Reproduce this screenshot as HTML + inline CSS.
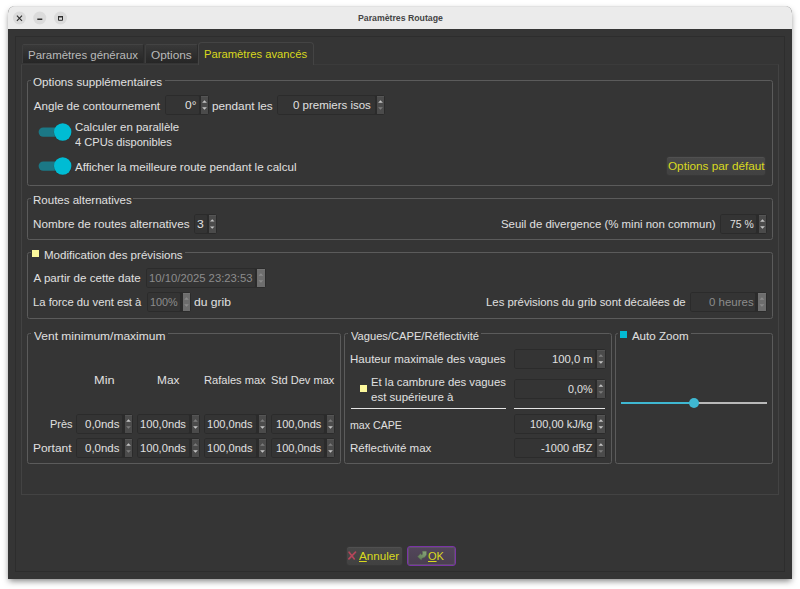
<!DOCTYPE html>
<html lang="fr"><head><meta charset="utf-8"><title>Paramètres Routage</title>
<style>
html,body{margin:0;padding:0;}
body{width:800px;height:589px;background:#fff;position:relative;overflow:hidden;
 font-family:"Liberation Sans",sans-serif;font-size:11.6px;color:#e0e0e0;}
#win{position:absolute;left:8px;top:6px;width:784px;height:573px;background:#353535;
 border-radius:7px 7px 0 0;box-shadow:0 3px 6px -1px rgba(0,0,0,.5);overflow:hidden;}
#tb{position:absolute;left:0;top:0;width:784px;height:23px;background:#ebebeb;border-top:1px solid #e2e2e2;box-sizing:border-box;}
.ttl{font-weight:bold;font-size:9.2px;color:#454545;}
.wb{position:absolute;top:5px;width:13px;height:13px;border-radius:50%;background:#dadada;}
.wb svg{display:block}
#frame{position:absolute;left:15px;top:36px;width:770px;height:536px;border:1px solid #2d2d2d;box-sizing:border-box;}
#pane{position:absolute;left:21px;top:64px;width:758px;height:431px;border:1px solid #434343;border-top-color:#3b3b3b;box-sizing:border-box;}
.tab{position:absolute;top:44px;height:19px;box-sizing:border-box;border-top:1px solid #434343;border-left:1px solid #3e3e3e;border-right:1px solid #2b2b2b;
 border-radius:2px 2px 0 0;background:linear-gradient(#393939,#262626);}
.tabsel{position:absolute;top:42px;height:23px;box-sizing:border-box;border:1px solid #444;border-bottom:none;
 border-radius:4px 4px 0 0;background:#353535;}
.t{position:absolute;height:16px;line-height:16px;white-space:nowrap;transform-origin:0 50%;}
.dim{color:#bababa}
.yel{color:#d9d91e}
.dtx{color:#8c8c8c}
.g{position:absolute;box-sizing:border-box;border:1px solid #5b5b5b;border-radius:2.5px;}
.gg{position:absolute;height:3px;background:#353535;}
.sp{position:absolute;box-sizing:border-box;background:#2b2b2b;border-radius:3px;}
.sp .f{position:absolute;left:1px;top:1px;box-sizing:border-box;border-radius:1px;background:#343434;}
.sp .b{position:absolute;right:1px;top:1px;background:#4b4b4b;border-top:1px solid #555;box-sizing:border-box;}
.sp .b svg{position:absolute;left:0;width:100%;display:block;fill:#c4c4c4;}
.sp .b svg.u{top:2.5px;}
.sp .b svg.d{bottom:4px;}
.sp .b svg.off{fill:#7c7c7c;}
.sp.dis .b{background:#6d6d6d;border-top-color:#747474}
.sp.dis .b svg{fill:#8a8a8a}
.btn{position:absolute;box-sizing:border-box;border:1px solid #383838;border-radius:3px;background:linear-gradient(#484848,#414141);box-shadow:inset 0 1px 0 #505050;}
.btn.ok{border-color:#7a34a6;background:linear-gradient(#52465a,#4a3f50);box-shadow:inset 0 0 0 1px #5f5367;}
.cb{position:absolute;width:7px;height:7px;}
.hl{position:absolute;height:1px;background:#e4e4e4;}
u{text-decoration:underline;text-decoration-thickness:1px;text-underline-offset:.5px;}
</style></head>
<body>
<div id="win"><div id="tb"><svg width="80" height="22" viewBox="0 0 80 22" style="position:absolute;left:0;top:0;display:block"><circle cx="11.45" cy="11" r="6.5" fill="#dbdbdb"/><circle cx="31.75" cy="11" r="6.5" fill="#dbdbdb"/><circle cx="52.5" cy="11" r="6.5" fill="#dbdbdb"/><path d="M8.9 8.7 L14 13.8 M14 8.7 L8.9 13.8" stroke="#2f2f2f" stroke-width="1.15" fill="none"/><path d="M29.3 12.2 H34.3" stroke="#2f2f2f" stroke-width="1.4" fill="none"/><path d="M50.5 9.8 H54.5 V13.3 H50.5 Z" stroke="#2f2f2f" stroke-width="1" fill="none"/><path d="M50 9.6 H55" stroke="#2f2f2f" stroke-width="1.3" fill="none"/></svg></div></div>
<div class="t ttl" style="left:357.53px;top:9.70px;transform:scaleX(0.9499);">Paramètres Routage</div>
<div id="frame"></div>
<div id="pane"></div>
<div class="tab" style="left:22px;width:122px"></div>
<div class="tab" style="left:145px;width:53px"></div>
<div class="tabsel" style="left:198px;width:116px"></div>
<div class="t dim" style="left:28.01px;top:47.00px;transform:scaleX(0.9865);">Paramètres généraux</div>
<div class="t dim" style="left:150.74px;top:47.00px;transform:scaleX(1.0191);">Options</div>
<div class="t yel" style="left:203.97px;top:46.00px;transform:scaleX(0.9696);">Paramètres avancés</div>
<div class="g" style="left:27px;top:80px;width:746px;height:106px"></div>
<div class="gg" style="left:31px;top:79px;width:134px"></div>
<div class="t " style="left:33.25px;top:74.00px;transform:scaleX(1.0059);">Options supplémentaires</div>
<div class="t " style="left:33.75px;top:98.00px;">Angle de contournement</div>
<div class="sp" style="left:165px;top:95px;width:44px;height:20px"><div class="f" style="width:32.5px;height:18px"></div><div class="b" style="width:7px;height:18px"><svg class="u" width="7" height="3" viewBox="0 0 7 3"><path d="M1.1 2.7 L3.5 0.2 L5.9 2.7 Z"/></svg><svg class="d" width="7" height="3" viewBox="0 0 7 3"><path d="M1.1 0.3 L3.5 2.8 L5.9 0.3 Z"/></svg></div></div>
<div class="t " style="left:184.58px;top:97.00px;transform:scaleX(1.0300);">0°</div>
<div class="t " style="left:212.24px;top:98.00px;transform:scaleX(1.0128);">pendant les</div>
<div class="sp" style="left:276.5px;top:95px;width:108.5px;height:20px"><div class="f" style="width:97.0px;height:18px"></div><div class="b" style="width:7px;height:18px"><svg class="u" width="7" height="3" viewBox="0 0 7 3"><path d="M1.1 2.7 L3.5 0.2 L5.9 2.7 Z"/></svg><svg class="d off" width="7" height="3" viewBox="0 0 7 3"><path d="M1.1 0.3 L3.5 2.8 L5.9 0.3 Z"/></svg></div></div>
<div class="t " style="left:293.25px;top:97.00px;transform:scaleX(0.9904);">0 premiers isos</div>
<svg style="position:absolute;left:36px;top:120.1px" width="40" height="24" viewBox="0 0 40 24"><rect x="2.6" y="7.4" width="30" height="9.4" rx="4.7" fill="#1b7886"/><circle cx="26.7" cy="12.5" r="8.9" fill="#2c2c2c" opacity=".45"/><circle cx="26.7" cy="12" r="8.7" fill="#00bcd4"/></svg>
<svg style="position:absolute;left:36px;top:154.3px" width="40" height="24" viewBox="0 0 40 24"><rect x="2.6" y="7.4" width="30" height="9.4" rx="4.7" fill="#1b7886"/><circle cx="26.7" cy="12.5" r="8.9" fill="#2c2c2c" opacity=".45"/><circle cx="26.7" cy="12" r="8.7" fill="#00bcd4"/></svg>
<div class="t " style="left:74.51px;top:119.00px;transform:scaleX(0.9852);">Calculer en parallèle</div>
<div class="t " style="left:74.76px;top:133.50px;transform:scaleX(0.9572);">4 CPUs disponibles</div>
<div class="t " style="left:75.00px;top:159.00px;">Afficher la meilleure route pendant le calcul</div>
<div class="btn" style="left:666px;top:156px;width:100px;height:20px"></div>
<div class="t yel" style="left:667.59px;top:157.80px;transform:scaleX(1.0116);">Options par défaut</div>
<div class="g" style="left:27px;top:198px;width:746px;height:42px"></div>
<div class="gg" style="left:31px;top:197px;width:102px"></div>
<div class="t " style="left:32.85px;top:192.00px;transform:scaleX(0.9939);">Routes alternatives</div>
<div class="t " style="left:32.84px;top:216.00px;transform:scaleX(1.0075);">Nombre de routes alternatives</div>
<div class="sp" style="left:193.5px;top:214px;width:23.0px;height:20px"><div class="f" style="width:12.5px;height:18px"></div><div class="b" style="width:6.5px;height:18px"><svg class="u" width="7" height="3" viewBox="0 0 7 3"><path d="M1.1 2.7 L3.5 0.2 L5.9 2.7 Z"/></svg><svg class="d" width="7" height="3" viewBox="0 0 7 3"><path d="M1.1 0.3 L3.5 2.8 L5.9 0.3 Z"/></svg></div></div>
<div class="t " style="left:197.23px;top:216.00px;transform:scaleX(1.0455);">3</div>
<div class="t " style="left:501.01px;top:216.00px;transform:scaleX(0.9850);">Seuil de divergence (% mini non commun)</div>
<div class="sp" style="left:719.5px;top:214px;width:47.0px;height:20px"><div class="f" style="width:35.5px;height:18px"></div><div class="b" style="width:7px;height:18px"><svg class="u" width="7" height="3" viewBox="0 0 7 3"><path d="M1.1 2.7 L3.5 0.2 L5.9 2.7 Z"/></svg><svg class="d" width="7" height="3" viewBox="0 0 7 3"><path d="M1.1 0.3 L3.5 2.8 L5.9 0.3 Z"/></svg></div></div>
<div class="t " style="left:729.55px;top:216.00px;transform:scaleX(0.8971);">75 %</div>
<div class="g" style="left:27px;top:252px;width:746px;height:67px"></div>
<div class="gg" style="left:31px;top:251px;width:153.5px"></div>
<div class="cb" style="left:32px;top:250px;background:#fcf89c"></div>
<div class="t " style="left:44.35px;top:246.70px;transform:scaleX(0.9957);">Modification des prévisions</div>
<div class="t " style="left:33.60px;top:270.00px;">A partir de cette date</div>
<div class="sp dis" style="left:145.5px;top:268px;width:120.5px;height:20px"><div class="f" style="width:108.2px;height:18px"></div><div class="b" style="width:7.8px;height:18px"><svg class="u" width="7" height="3" viewBox="0 0 7 3"><path d="M1.1 2.7 L3.5 0.2 L5.9 2.7 Z"/></svg><svg class="d" width="7" height="3" viewBox="0 0 7 3"><path d="M1.1 0.3 L3.5 2.8 L5.9 0.3 Z"/></svg></div></div>
<div class="t dtx" style="left:149.02px;top:270.00px;transform:scaleX(0.9734);">10/10/2025 23:23:53</div>
<div class="t " style="left:32.87px;top:294.00px;transform:scaleX(0.9720);">La force du vent est à</div>
<div class="sp dis" style="left:147px;top:292px;width:43.75px;height:20px"><div class="f" style="width:32.25px;height:18px"></div><div class="b" style="width:7px;height:18px"><svg class="u" width="7" height="3" viewBox="0 0 7 3"><path d="M1.1 2.7 L3.5 0.2 L5.9 2.7 Z"/></svg><svg class="d" width="7" height="3" viewBox="0 0 7 3"><path d="M1.1 0.3 L3.5 2.8 L5.9 0.3 Z"/></svg></div></div>
<div class="t dtx" style="left:149.90px;top:294.00px;transform:scaleX(0.9351);">100%</div>
<div class="t " style="left:194.48px;top:294.00px;transform:scaleX(1.0435);">du grib</div>
<div class="t " style="left:486.27px;top:294.00px;transform:scaleX(0.9798);">Les prévisions du grib sont décalées de</div>
<div class="sp dis" style="left:689.5px;top:292px;width:77.25px;height:20px"><div class="f" style="width:64.95px;height:18px"></div><div class="b" style="width:7.8px;height:18px"><svg class="u" width="7" height="3" viewBox="0 0 7 3"><path d="M1.1 2.7 L3.5 0.2 L5.9 2.7 Z"/></svg><svg class="d" width="7" height="3" viewBox="0 0 7 3"><path d="M1.1 0.3 L3.5 2.8 L5.9 0.3 Z"/></svg></div></div>
<div class="t dtx" style="left:709.26px;top:294.00px;transform:scaleX(0.9887);">0 heures</div>
<div class="g" style="left:27px;top:333px;width:314px;height:131px"></div>
<div class="gg" style="left:31px;top:332px;width:137px"></div>
<div class="t " style="left:33.75px;top:327.70px;transform:scaleX(1.0356);">Vent minimum/maximum</div>
<div class="t " style="left:93.97px;top:372.00px;transform:scaleX(1.1014);">Min</div>
<div class="t " style="left:156.93px;top:372.00px;transform:scaleX(1.0238);">Max</div>
<div class="t " style="left:204.28px;top:372.00px;transform:scaleX(0.9567);">Rafales max</div>
<div class="t " style="left:270.92px;top:372.00px;transform:scaleX(0.9551);">Std Dev max</div>
<div class="t " style="left:49.59px;top:416.00px;transform:scaleX(0.9451);">Près</div>
<div class="t " style="left:33.33px;top:440.00px;transform:scaleX(1.0313);">Portant</div>
<div class="sp" style="left:75.5px;top:414px;width:57.5px;height:20px"><div class="f" style="width:45.5px;height:18px"></div><div class="b" style="width:7px;height:18px"><svg class="u" width="7" height="3" viewBox="0 0 7 3"><path d="M1.1 2.7 L3.5 0.2 L5.9 2.7 Z"/></svg><svg class="d off" width="7" height="3" viewBox="0 0 7 3"><path d="M1.1 0.3 L3.5 2.8 L5.9 0.3 Z"/></svg></div></div>
<div class="t " style="left:85.30px;top:416.00px;transform:scaleX(0.9912);">0,0nds</div>
<div class="sp" style="left:136.5px;top:414px;width:63.4px;height:20px"><div class="f" style="width:51.4px;height:18px"></div><div class="b" style="width:7px;height:18px"><svg class="u off" width="7" height="3" viewBox="0 0 7 3"><path d="M1.1 2.7 L3.5 0.2 L5.9 2.7 Z"/></svg><svg class="d" width="7" height="3" viewBox="0 0 7 3"><path d="M1.1 0.3 L3.5 2.8 L5.9 0.3 Z"/></svg></div></div>
<div class="t " style="left:140.28px;top:416.00px;transform:scaleX(0.9626);">100,0nds</div>
<div class="sp" style="left:203.5px;top:414px;width:63.3px;height:20px"><div class="f" style="width:51.3px;height:18px"></div><div class="b" style="width:7px;height:18px"><svg class="u off" width="7" height="3" viewBox="0 0 7 3"><path d="M1.1 2.7 L3.5 0.2 L5.9 2.7 Z"/></svg><svg class="d" width="7" height="3" viewBox="0 0 7 3"><path d="M1.1 0.3 L3.5 2.8 L5.9 0.3 Z"/></svg></div></div>
<div class="t " style="left:207.48px;top:416.00px;transform:scaleX(0.9540);">100,0nds</div>
<div class="sp" style="left:271.4px;top:414px;width:63.3px;height:20px"><div class="f" style="width:51.3px;height:18px"></div><div class="b" style="width:7px;height:18px"><svg class="u off" width="7" height="3" viewBox="0 0 7 3"><path d="M1.1 2.7 L3.5 0.2 L5.9 2.7 Z"/></svg><svg class="d" width="7" height="3" viewBox="0 0 7 3"><path d="M1.1 0.3 L3.5 2.8 L5.9 0.3 Z"/></svg></div></div>
<div class="t " style="left:275.54px;top:416.00px;transform:scaleX(0.9508);">100,0nds</div>
<div class="sp" style="left:75.5px;top:438px;width:57.5px;height:20px"><div class="f" style="width:45.5px;height:18px"></div><div class="b" style="width:7px;height:18px"><svg class="u" width="7" height="3" viewBox="0 0 7 3"><path d="M1.1 2.7 L3.5 0.2 L5.9 2.7 Z"/></svg><svg class="d off" width="7" height="3" viewBox="0 0 7 3"><path d="M1.1 0.3 L3.5 2.8 L5.9 0.3 Z"/></svg></div></div>
<div class="t " style="left:85.30px;top:440.00px;transform:scaleX(0.9912);">0,0nds</div>
<div class="sp" style="left:136.5px;top:438px;width:63.4px;height:20px"><div class="f" style="width:51.4px;height:18px"></div><div class="b" style="width:7px;height:18px"><svg class="u off" width="7" height="3" viewBox="0 0 7 3"><path d="M1.1 2.7 L3.5 0.2 L5.9 2.7 Z"/></svg><svg class="d" width="7" height="3" viewBox="0 0 7 3"><path d="M1.1 0.3 L3.5 2.8 L5.9 0.3 Z"/></svg></div></div>
<div class="t " style="left:140.28px;top:440.00px;transform:scaleX(0.9626);">100,0nds</div>
<div class="sp" style="left:203.5px;top:438px;width:63.3px;height:20px"><div class="f" style="width:51.3px;height:18px"></div><div class="b" style="width:7px;height:18px"><svg class="u off" width="7" height="3" viewBox="0 0 7 3"><path d="M1.1 2.7 L3.5 0.2 L5.9 2.7 Z"/></svg><svg class="d" width="7" height="3" viewBox="0 0 7 3"><path d="M1.1 0.3 L3.5 2.8 L5.9 0.3 Z"/></svg></div></div>
<div class="t " style="left:207.48px;top:440.00px;transform:scaleX(0.9540);">100,0nds</div>
<div class="sp" style="left:271.4px;top:438px;width:63.3px;height:20px"><div class="f" style="width:51.3px;height:18px"></div><div class="b" style="width:7px;height:18px"><svg class="u off" width="7" height="3" viewBox="0 0 7 3"><path d="M1.1 2.7 L3.5 0.2 L5.9 2.7 Z"/></svg><svg class="d" width="7" height="3" viewBox="0 0 7 3"><path d="M1.1 0.3 L3.5 2.8 L5.9 0.3 Z"/></svg></div></div>
<div class="t " style="left:275.54px;top:440.00px;transform:scaleX(0.9508);">100,0nds</div>
<div class="g" style="left:344px;top:333px;width:268px;height:131px"></div>
<div class="gg" style="left:348px;top:332px;width:133px"></div>
<div class="t " style="left:350.50px;top:327.70px;transform:scaleX(0.9605);">Vagues/CAPE/Réflectivité</div>
<div class="t " style="left:349.75px;top:351.00px;transform:scaleX(0.9936);">Hauteur maximale des vagues</div>
<div class="sp" style="left:513.5px;top:349px;width:92.3px;height:20px"><div class="f" style="width:80.2px;height:18px"></div><div class="b" style="width:7.8px;height:18px"><svg class="u off" width="7" height="3" viewBox="0 0 7 3"><path d="M1.1 2.7 L3.5 0.2 L5.9 2.7 Z"/></svg><svg class="d" width="7" height="3" viewBox="0 0 7 3"><path d="M1.1 0.3 L3.5 2.8 L5.9 0.3 Z"/></svg></div></div>
<div class="t " style="left:552.27px;top:351.00px;transform:scaleX(0.9728);">100,0 m</div>
<div class="cb" style="left:360px;top:385px;background:#fcf89c"></div>
<div class="t " style="left:370.52px;top:374.00px;transform:scaleX(0.9781);">Et la cambrure des vagues</div>
<div class="t " style="left:370.50px;top:388.50px;transform:scaleX(0.9909);">est supérieure à</div>
<div class="sp" style="left:513.5px;top:379px;width:92.3px;height:20px"><div class="f" style="width:80.2px;height:18px"></div><div class="b" style="width:7.8px;height:18px"><svg class="u" width="7" height="3" viewBox="0 0 7 3"><path d="M1.1 2.7 L3.5 0.2 L5.9 2.7 Z"/></svg><svg class="d off" width="7" height="3" viewBox="0 0 7 3"><path d="M1.1 0.3 L3.5 2.8 L5.9 0.3 Z"/></svg></div></div>
<div class="t " style="left:568.14px;top:381.00px;transform:scaleX(0.9243);">0,0%</div>
<div class="hl" style="left:351px;top:408px;width:155px"></div>
<div class="hl" style="left:514px;top:408px;width:91px"></div>
<div class="t " style="left:349.81px;top:417.00px;transform:scaleX(0.9144);">max CAPE</div>
<div class="sp" style="left:513.5px;top:414px;width:92.3px;height:20px"><div class="f" style="width:80.2px;height:18px"></div><div class="b" style="width:7.8px;height:18px"><svg class="u" width="7" height="3" viewBox="0 0 7 3"><path d="M1.1 2.7 L3.5 0.2 L5.9 2.7 Z"/></svg><svg class="d" width="7" height="3" viewBox="0 0 7 3"><path d="M1.1 0.3 L3.5 2.8 L5.9 0.3 Z"/></svg></div></div>
<div class="t " style="left:529.79px;top:416.00px;transform:scaleX(0.9494);">100,00 kJ/kg</div>
<div class="t " style="left:349.75px;top:440.00px;transform:scaleX(0.9938);">Réflectivité max</div>
<div class="sp" style="left:513.5px;top:438px;width:92.3px;height:20px"><div class="f" style="width:80.2px;height:18px"></div><div class="b" style="width:7.8px;height:18px"><svg class="u" width="7" height="3" viewBox="0 0 7 3"><path d="M1.1 2.7 L3.5 0.2 L5.9 2.7 Z"/></svg><svg class="d off" width="7" height="3" viewBox="0 0 7 3"><path d="M1.1 0.3 L3.5 2.8 L5.9 0.3 Z"/></svg></div></div>
<div class="t " style="left:540.78px;top:440.00px;transform:scaleX(0.9486);">-1000 dBZ</div>
<div class="g" style="left:615px;top:333px;width:158px;height:131px"></div>
<div class="gg" style="left:618px;top:332px;width:73px"></div>
<div class="cb" style="left:620px;top:331px;background:#04bad3"></div>
<div class="t " style="left:631.90px;top:327.70px;">Auto Zoom</div>
<div class="hl" style="left:621px;top:402px;width:73px;height:2px;background:#3fb8d2"></div>
<div class="hl" style="left:694px;top:402px;width:73px;height:2px;background:#b9b9b9"></div>
<div style="position:absolute;left:689px;top:398px;width:10px;height:10px;border-radius:50%;background:#3fb8d2"></div>
<div class="btn" style="left:346px;top:546px;width:57px;height:20px"></div>
<svg style="position:absolute;left:347px;top:550px" width="11" height="11" viewBox="347 550 11 11"><path d="M349.1 552.2 L354.3 558.9 M355.5 552.1 L348.9 558.9" stroke="#b4465a" stroke-width="1.7" fill="none" stroke-linecap="round"/></svg>
<div class="t yel" style="left:358.60px;top:548.00px;transform:scaleX(1.0050);"><u>A</u>nnuler</div>
<div class="btn ok" style="left:407px;top:546px;width:49px;height:20px"></div>
<svg style="position:absolute;left:416px;top:549px" width="13" height="13" viewBox="416 549 13 13"><defs><linearGradient id="ga" x1="1" y1="0" x2="0" y2="1"><stop offset="0" stop-color="#8aa67c"/><stop offset="1" stop-color="#5e7a54"/></linearGradient></defs><path d="M417.6 556.8 L420.7 553.5 L421.3 555 L422.5 554.3 L422.4 551.2 L426.4 551.2 L426.5 554.8 L424.7 557.2 L421.9 558.3 L421.3 559.9 Z" fill="url(#ga)" stroke="#566f4d" stroke-width=".4" stroke-linejoin="round"/></svg>
<div class="t yel" style="left:427.52px;top:548.00px;transform:scaleX(0.9500);"><u>O</u>K</div>
</body></html>
